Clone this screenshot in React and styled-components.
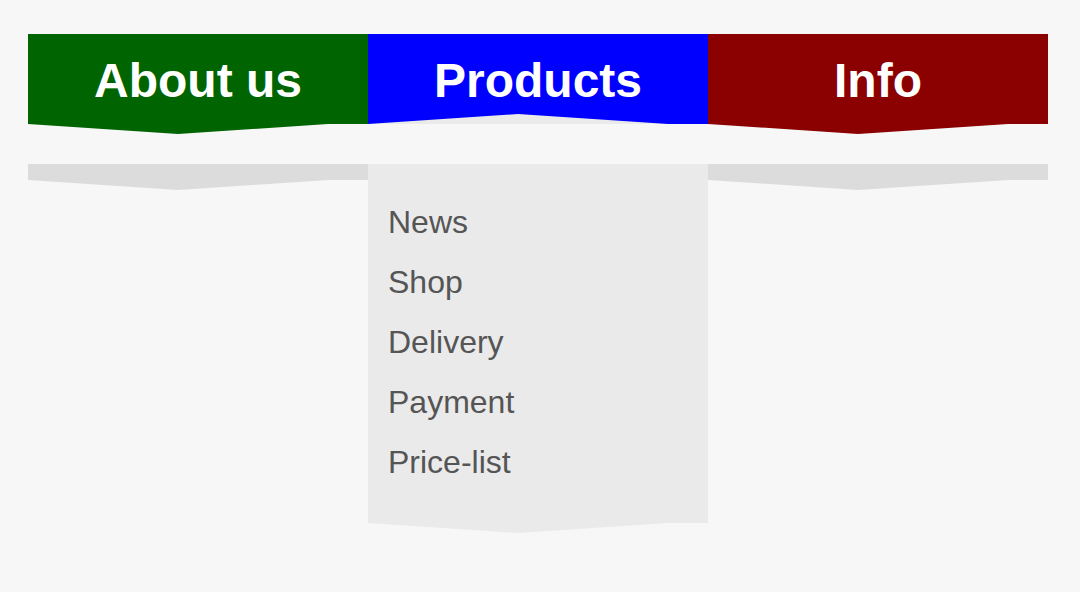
import React from 'react';
import styled, { createGlobalStyle, css } from 'styled-components';

const GlobalStyle = createGlobalStyle`
  html, body {
    margin: 0;
    background: #f7f7f7;
    font-family: "Liberation Sans", Arial, sans-serif;
  }
`;

const Page = styled.div`
  padding: 34px 32px 0 28px;
  height: 592px;
  box-sizing: border-box;
`;

const Menu = styled.ul`
  display: grid;
  grid-template-columns: repeat(3, 340px);
  margin: 0;
  padding: 0;
  list-style: none;
`;

const Column = styled.li`
  display: flex;
  flex-direction: column;
  gap: 40px;
`;

// 300px wide triangle hanging under a block, tip 150px from its left edge
const chevron = (color) => css`
  content: '';
  position: absolute;
  left: 0;
  top: 100%;
  width: 0;
  height: 0;
  border-left: 150px solid transparent;
  border-right: 150px solid transparent;
  border-top: 10px solid ${color};
`;

const Tab = styled.a`
  position: relative;
  display: block;
  height: 90px;
  padding-top: 3px;
  box-sizing: border-box;
  line-height: 87px;
  text-align: center;
  font-size: 48px;
  font-weight: 700;
  color: #fff;
  text-decoration: none;
  background: ${(p) => p.$color};

  ${(p) =>
    p.$active
      ? css`
          &::before {
            content: '';
            position: absolute;
            left: 0;
            bottom: 0;
            width: 0;
            height: 0;
            border-left: 150px solid transparent;
            border-right: 150px solid transparent;
            border-bottom: 10px solid #eaeaea;
          }
        `
      : css`
          &::after {
            ${chevron(p.$color)}
          }
        `}
`;

const Dropdown = styled.ul`
  position: relative;
  margin: 0;
  padding: ${(p) => (p.$open ? '28px 20px 31px' : '0')};
  height: ${(p) => (p.$open ? 'auto' : '16px')};
  box-sizing: ${(p) => (p.$open ? 'content-box' : 'border-box')};
  list-style: none;
  background: ${(p) => (p.$open ? '#eaeaea' : '#dcdcdc')};

  &::after {
    ${(p) => chevron(p.$open ? '#eaeaea' : '#dcdcdc')}
  }
`;

const Item = styled.li`
  font-size: 32px;
  line-height: 60px;
  color: #555;
`;

const menu = [
  { label: 'About us', color: '#006400', items: [] },
  {
    label: 'Products',
    color: '#0000ff',
    active: true,
    items: ['News', 'Shop', 'Delivery', 'Payment', 'Price-list'],
  },
  { label: 'Info', color: '#8b0000', items: [] },
];

export default function App() {
  return (
    <>
      <GlobalStyle />
      <Page>
        <Menu>
          {menu.map((m) => (
            <Column key={m.label}>
              <Tab href="#" $color={m.color} $active={m.active}>
                {m.label}
              </Tab>
              <Dropdown $open={m.active}>
                {m.items.map((it) => (
                  <Item key={it}>{it}</Item>
                ))}
              </Dropdown>
            </Column>
          ))}
        </Menu>
      </Page>
    </>
  );
}
